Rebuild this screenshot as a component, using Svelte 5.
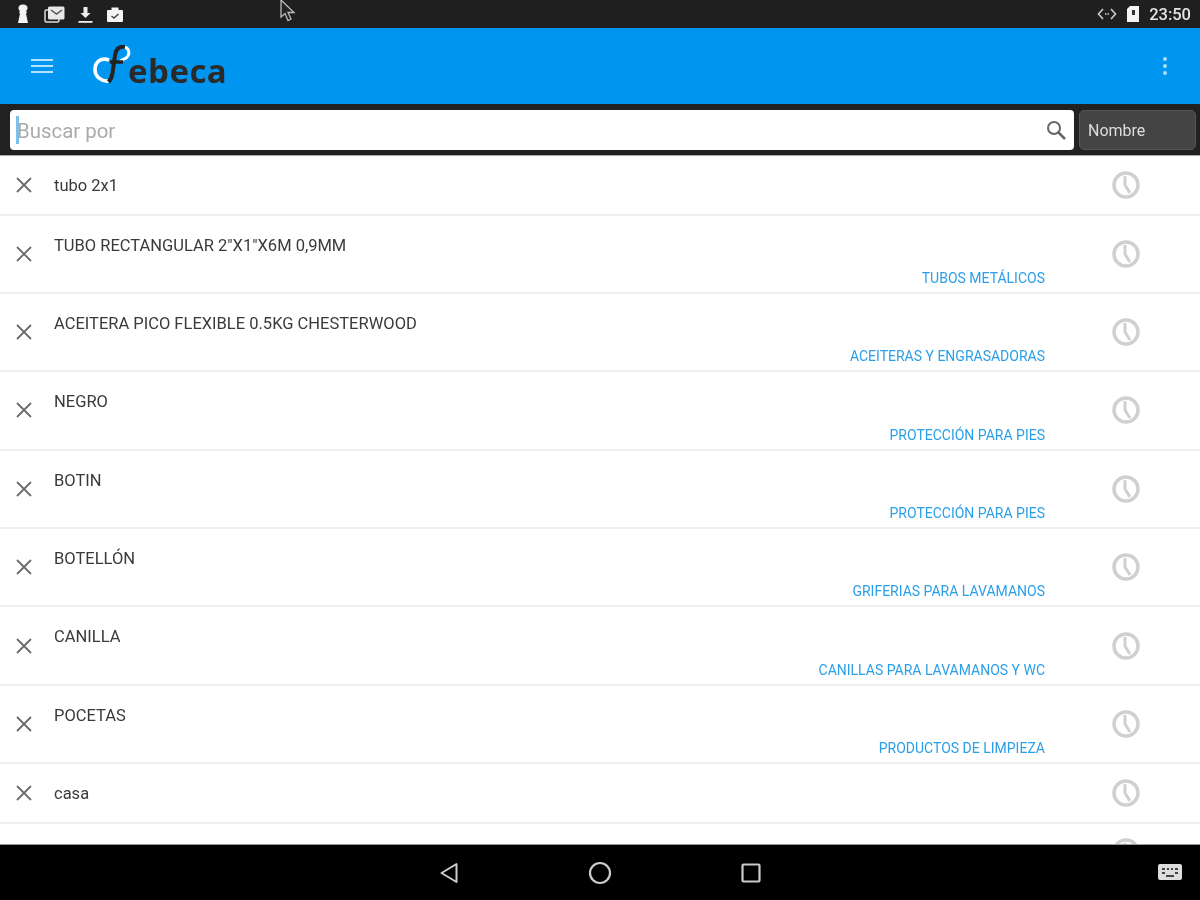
<script>
  const rows = [
    { name: "tubo 2x1" },
    { name: "TUBO RECTANGULAR 2\"X1\"X6M 0,9MM", cat: "TUBOS METÁLICOS" },
    { name: "ACEITERA PICO FLEXIBLE 0.5KG CHESTERWOOD", cat: "ACEITERAS Y ENGRASADORAS" },
    { name: "NEGRO", cat: "PROTECCIÓN PARA PIES" },
    { name: "BOTIN", cat: "PROTECCIÓN PARA PIES" },
    { name: "BOTELLÓN", cat: "GRIFERIAS PARA LAVAMANOS" },
    { name: "CANILLA", cat: "CANILLAS PARA LAVAMANOS Y WC" },
    { name: "POCETAS", cat: "PRODUCTOS DE LIMPIEZA" },
    { name: "casa" },
    { name: "" },
  ];
</script>

<div class="screen">
  <!-- status bar -->
  <div class="status">
    <div class="status-left">
      <svg width="16" height="20" viewBox="0 0 16 20"><path d="M3.500 4a4.500 3.500 0 0 1 9 0c0 1.500-.7 2.500-1.500 3l1 1.500-1 1 2 9.500H3l2-9.500-1-1L5 7c-.8-.5-1.500-1.500-1.500-3z" fill="#f4f4f4"/></svg>
      <svg width="21" height="20" viewBox="0 0 21 20"><rect x="1" y="6" width="14" height="12" rx="1.500" fill="none" stroke="#ddd" stroke-width="1.500"/><rect x="4" y="2.500" width="16.500" height="13" rx="1.500" fill="#e8e8e8"/><path d="M7 6l5.500 4L18 6" fill="none" stroke="#555" stroke-width="1.500"/></svg>
      <svg width="15" height="20" viewBox="0 0 15 20"><path d="M5.500 3h4v6h3l-5 5-5-5h3z" fill="#eee"/><rect x="0.500" y="17" width="14" height="1.800" fill="#eee"/></svg>
      <svg width="18" height="20" viewBox="0 0 18 20"><path d="M5.500 6V3.500h7V6H16a1 1 0 0 1 1 1v10a1 1 0 0 1-1 1H2a1 1 0 0 1-1-1V7a1 1 0 0 1 1-1z" fill="#f4f4f4"/><path d="M5.500 12l2.500 2 4.500-4" fill="none" stroke="#444" stroke-width="1.500"/></svg>
    </div>
    <div class="status-right">
      <svg width="20" height="14" viewBox="0 0 20 14"><path d="M6 2L1.500 7 6 12M14 2l4.500 5L14 12" fill="none" stroke="#ccc" stroke-width="1.600"/><path d="M8 7h4" stroke="#ccc" stroke-width="1.600" stroke-dasharray="1.500 1"/></svg>
      <svg width="14" height="18" viewBox="0 0 14 18"><path d="M4 1h9v16H1V4z" fill="#f4f4f4"/><path d="M6 5h3v5H6z" fill="#333"/></svg>
      <span class="clock">23:50</span>
    </div>
    <!-- mouse pointer from the recording -->
    <svg class="pointer" width="20" height="24" viewBox="0 0 20 24"><path d="M1 0v17l4-3.500 3 7 3-1.500-3-6.500h6z" fill="#222" stroke="#bbb" stroke-width="1.300"/></svg>
  </div>

  <!-- toolbar -->
  <div class="toolbar">
    <svg class="menu" width="24" height="18" viewBox="0 0 24 18"><path d="M1 3h22M1 9h22M1 15h22" stroke="#b5e2fd" stroke-width="2.200"/></svg>
    <div class="logo">
      <svg width="42" height="42" viewBox="0 0 42 42">
        <path d="M17 15C9 12 3 17 3 24.500S10 37 17 36" fill="none" stroke="#fff" stroke-width="3.600"/>
        <path d="M31 2c6 0 8 7 3 11l-6 3" fill="none" stroke="#fff" stroke-width="3"/>
        <path d="M33 2c-6-1-9 2-10 8l-2.500 18c-.5 4-2 7-4 9" fill="none" stroke="#222" stroke-width="4"/>
        <path d="M18 17h13" stroke="#222" stroke-width="3.500"/>
      </svg>
      <span class="logo-text">ebeca</span>
    </div>
    <svg class="more" width="6" height="20" viewBox="0 0 6 20"><g fill="#a9dffd"><circle cx="3" cy="3" r="2"/><circle cx="3" cy="10" r="2"/><circle cx="3" cy="17" r="2"/></g></svg>
  </div>

  <!-- search -->
  <div class="searchbar">
    <div class="input">
      <span class="caret"></span>
      <span class="placeholder">Buscar por</span>
      <svg class="lens" width="22" height="22" viewBox="0 0 22 22"><circle cx="9" cy="9" r="6" fill="none" stroke="#666" stroke-width="2"/><path d="M13.500 13.500L20 20" stroke="#666" stroke-width="2.500"/></svg>
    </div>
    <div class="select">Nombre</div>
  </div>

  <!-- history list -->
  <div class="list">
    {#each rows as row}
      <div class="row" class:double={row.cat}>
        <svg class="x" width="18" height="18" viewBox="0 0 18 18"><path d="M2 2l14 14M16 2L2 16" stroke="#6c6c6c" stroke-width="1.800"/></svg>
        <div class="body">
          <div class="name">{row.name}</div>
          {#if row.cat}<div class="cat">{row.cat}</div>{/if}
        </div>
        <svg class="hist" width="30" height="30" viewBox="0 0 30 30"><circle cx="15" cy="15" r="12" fill="#fff" stroke="#d0d0d0" stroke-width="3.500"/><path d="M14 6v9l5 8" fill="none" stroke="#d0d0d0" stroke-width="3"/></svg>
      </div>
    {/each}
  </div>

  <!-- nav bar -->
  <div class="nav">
    <svg width="20" height="24" viewBox="0 0 20 24"><path d="M17.500 3v18L2.500 12z" fill="none" stroke="#ccc" stroke-width="2" stroke-linejoin="round"/></svg>
    <svg width="24" height="24" viewBox="0 0 24 24"><circle cx="12" cy="12" r="10" fill="none" stroke="#ccc" stroke-width="2.200"/></svg>
    <svg width="20" height="20" viewBox="0 0 20 20"><rect x="1.500" y="1.500" width="17" height="17" rx="1" fill="none" stroke="#ccc" stroke-width="2.200"/></svg>
    <svg class="kbd" width="26" height="18" viewBox="0 0 26 18"><rect x="1" y="1" width="24" height="16" rx="2" fill="#ddd"/><path d="M5 6h3M10 6h2M14 6h2M18 6h3M5 10h3M18 10h3M9 13h8" stroke="#444" stroke-width="2"/></svg>
  </div>
</div>

<style>
  :global(body) {
    margin: 0;
    background: #fff;
  }

  /* the capture is an upscaled video frame, everything is a bit soft */
  .screen {
    width: 1200px;
    height: 900px;
    display: flex;
    flex-direction: column;
    overflow: hidden;
    font-family: Roboto, "Liberation Sans", sans-serif;
    filter: blur(0.4px);
  }

  .status {
    position: relative;
    height: 28px;
    flex: none;
    background: #1f1f1f;
    display: flex;
    align-items: center;
    justify-content: space-between;
    padding: 0 9px 0 15px;
  }

  .status-left {
    display: flex;
    align-items: center;
    gap: 13px;
  }

  .status-right {
    display: flex;
    align-items: center;
    gap: 9px;
  }

  .clock {
    color: #e4e4e4;
    font-size: 16.500px;
    font-weight: 500;
  }

  .pointer {
    position: absolute;
    left: 280px;
    top: 0;
  }

  .toolbar {
    height: 76px;
    flex: none;
    background: #0095ee;
    display: flex;
    align-items: center;
    padding: 0 30px;
    box-sizing: border-box;
  }

  .logo {
    display: flex;
    align-items: flex-end;
    margin-left: 38px;
    color: #2a2a2a;
  }

  .logo svg {
    margin-right: -6px;
  }

  .logo-text {
    font-family: "Open Sans", sans-serif;
    font-size: 33px;
    font-weight: 700;
    line-height: 34px;
    letter-spacing: 0.5px;
    margin-bottom: -1px;
  }

  .more {
    margin-left: auto;
    margin-right: 2px;
  }

  .searchbar {
    height: 52px;
    flex: none;
    box-sizing: border-box;
    background: #212121;
    display: flex;
    gap: 5px;
    padding: 6px 4px 5px 10px;
    border-bottom: 1px solid #aaa;
  }

  .input {
    width: 1064px;
    background: #fff;
    border-radius: 4px;
    display: flex;
    align-items: center;
    padding: 0 7px 0 6px;
    box-sizing: border-box;
  }

  .caret {
    width: 3px;
    height: 28px;
    background: #7cc0ee;
    margin-right: -2px;
  }

  .placeholder {
    color: #aaa;
    font-size: 20.400px;
    margin-top: 2px;
  }

  .lens {
    margin-left: auto;
  }

  .select {
    flex: 1;
    background: #444;
    border: 1px solid #555;
    border-radius: 5px;
    color: #ddd;
    font-size: 16px;
    display: flex;
    align-items: center;
    padding-left: 8px;
  }

  .list {
    flex: 1;
    min-height: 0;
    overflow: hidden;
    background: #fff;
  }

  .row {
    height: 59.500px;
    box-sizing: border-box;
    border-bottom: 2px solid #eee;
    display: flex;
    align-items: center;
    padding: 0 59px 0 15px;
  }

  .row.double {
    height: 78.400px;
  }

  .x {
    flex: none;
  }

  .body {
    flex: 1;
    margin: 0 66px 0 21px;
    padding-top: 2px;
    align-self: stretch;
    display: flex;
    flex-direction: column;
    justify-content: center;
  }

  .double .body {
    justify-content: space-between;
    padding: 21px 0 6px;
    box-sizing: border-box;
  }

  .name {
    color: #3a3a3a;
    font-size: 16.500px;
    line-height: 18px;
  }

  .cat {
    color: #2a9fe8;
    font-size: 14px;
    line-height: 16px;
    text-align: right;
  }

  .hist {
    flex: none;
  }

  .nav {
    position: relative;
    height: 56px;
    flex: none;
    box-sizing: border-box;
    background: #000;
    border-top: 1px solid #999;
    display: flex;
    align-items: center;
    justify-content: center;
    gap: 129px;
  }

  .kbd {
    position: absolute;
    right: 17px;
    top: 18px;
  }
</style>
